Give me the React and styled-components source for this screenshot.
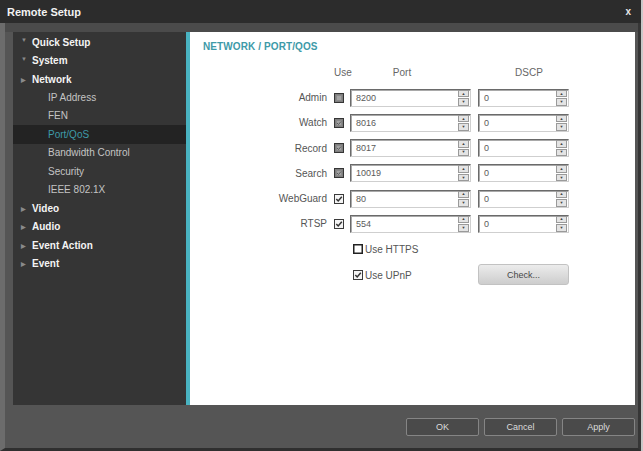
import React from 'react';
import styled, { createGlobalStyle } from 'styled-components';

const GlobalStyle = createGlobalStyle`
  html, body {
    margin: 0;
    padding: 0;
    background: #c9c9c9;
  }
  body {
    font-family: "Liberation Sans", Arial, sans-serif;
  }
`;

const TEAL = '#3e9aa8';

const Window = styled.div`
  width: 641px;
  height: 451px;
  display: flex;
  flex-direction: column;
  background: #525252;
`;

const TitleBar = styled.div`
  height: 23px;
  flex: none;
  display: flex;
  align-items: center;
  justify-content: space-between;
  padding: 0 10px 0 7px;
  background: #2c2c2c;
  color: #f2f2f2;
  font-size: 11px;
  font-weight: bold;
`;

const Close = styled.span`
  font-size: 10px;
  font-weight: bold;
  color: #e8e8e8;
`;

const Frame = styled.div`
  flex: 1;
  display: flex;
  flex-direction: column;
  border-left: 5px solid #6c6c6c;
  border-right: 3px solid #363636;
  border-bottom: 3px solid #2f2f2f;
  background: #555555;
`;

const Body = styled.div`
  height: 373px;
  display: flex;
  padding: 9px 3px 0 8px;
  background: linear-gradient(#4b4b4b 0, #4b4b4b 9px, #555 9px);
`;

const Sidebar = styled.div`
  width: 173px;
  flex: none;
  background: #353535;
  padding-top: 1px;
`;

const NavRow = styled.div`
  height: 18.45px;
  display: flex;
  align-items: center;
  padding-left: ${(p) => (p.$sub ? 35 : 8)}px;
  background: ${(p) => (p.$selected ? '#232323' : 'transparent')};
  color: ${(p) => (p.$selected ? TEAL : p.$sub ? '#c4c4c4' : '#f4f4f4')};
  font-size: 10px;
  font-weight: ${(p) => (p.$sub ? 'normal' : 'bold')};
  white-space: nowrap;
`;

const Arrow = styled.span`
  width: 11px;
  font-size: 6px;
  color: #8a8a8a;
  margin-top: ${(p) => (p.$open ? -4 : 0)}px;
`;

const Content = styled.div`
  flex: 1;
  background: #ffffff;
  border-left: 4px solid #49b3c1;
  padding: 9px 0 0 13px;
`;

const PageTitle = styled.div`
  height: 12px;
  line-height: 12px;
  font-size: 10px;
  font-weight: bold;
  color: ${TEAL};
  letter-spacing: 0.1px;
`;

const Form = styled.div`
  margin: 7px 0 0 -13px;
`;

const FieldRow = styled.div`
  display: grid;
  grid-template-columns: 137px 10px 120px 91px;
  column-gap: 7px;
  align-items: center;
  height: ${(p) => p.$h || 25.2}px;
  font-size: 10px;
  color: #555;
`;

const FieldLabel = styled.div`
  text-align: right;
  white-space: nowrap;
`;

const HeadCell = styled.div`
  text-align: center;
  color: #666;
  white-space: nowrap;
  padding: ${(p) => p.$pad || '0'};
`;

const CheckCell = styled.div`
  display: flex;
  align-items: center;
  margin-left: ${(p) => p.$offset || 0}px;
  svg {
    display: block;
  }
`;

const Spin = styled.div`
  display: flex;
  align-items: center;
  height: 18px;
  border: 1px solid;
  border-color: #6a6a6a #cfcfcf #cfcfcf #6a6a6a;
  box-shadow: inset 1px 1px 0 #a9a9a9;
  background: #fff;
  box-sizing: border-box;
  margin-left: ${(p) => (p.$first ? -1 : 0)}px;
`;

const SpinText = styled.span`
  flex: 1;
  padding-left: 5px;
  font-size: 9px;
  color: #5a5a5a;
`;

const SpinButtons = styled.div`
  width: 11px;
  height: 16px;
  margin-right: 1px;
  display: flex;
  flex-direction: column;
  gap: 1px;
`;

const SpinButton = styled.div`
  flex: 1;
  display: flex;
  align-items: center;
  justify-content: center;
  background: #e4e4e4;
  border: 1px solid #9a9a9a;
  font-size: 4px;
  line-height: 1;
  color: #444;
`;

const OptionLabel = styled.label`
  display: flex;
  align-items: center;
  gap: 2px;
  font-size: 10px;
  color: #555;
  padding-left: 2px;
`;

const CheckButton = styled.button`
  height: 21px;
  width: 91px;
  border: 1px solid #c2c2c2;
  border-radius: 3px;
  background: linear-gradient(#ececec, #cdcdcd);
  font-family: inherit;
  font-size: 9px;
  color: #474747;
  padding: 0;
  margin-top: -1px;
`;

const Footer = styled.div`
  flex: 1;
  display: flex;
  justify-content: flex-end;
  align-items: flex-start;
  gap: 5px;
  padding: 13px 3px 0 0;
`;

const FooterButton = styled.button`
  width: 73px;
  height: 18px;
  border: 1px solid #858585;
  border-radius: 2px;
  background: #4a4a4a;
  color: #dcdcdc;
  font-family: inherit;
  font-size: 9px;
  padding: 0;
`;

function Check({ kind, faint }) {
  if (kind === 'disabled') {
    return (
      <svg width="10" height="10" viewBox="0 0 10 10">
        <rect x="0.5" y="0.5" width="9" height="9" fill="#7e7e7e" stroke="#353535" />
        <rect x="2.5" y="2.5" width="5" height="5" fill="#a4a4a4" stroke="#8a8a8a" />
        {faint && <path d="M3 5 L4.5 6.5 L7 3.5" fill="none" stroke="#5c5c5c" strokeWidth="1" />}
      </svg>
    );
  }
  if (kind === 'checked') {
    return (
      <svg width="10" height="10" viewBox="0 0 10 10">
        <rect x="0.5" y="0.5" width="9" height="9" fill="#f4f4f4" stroke="#3a3a3a" />
        <path d="M2.3 5 L4.2 7 L7.8 2.8" fill="none" stroke="#333" strokeWidth="1.5" />
      </svg>
    );
  }
  return (
    <svg width="10" height="10" viewBox="0 0 10 10">
      <rect x="0.75" y="0.75" width="8.5" height="8.5" fill="#fff" stroke="#222" strokeWidth="1.5" />
    </svg>
  );
}

function SpinBox({ value, first }) {
  return (
    <Spin $first={first}>
      <SpinText>{value}</SpinText>
      <SpinButtons>
        <SpinButton>▲</SpinButton>
        <SpinButton>▼</SpinButton>
      </SpinButtons>
    </Spin>
  );
}

const navItems = [
  { label: 'Quick Setup', open: true },
  { label: 'System', open: true },
  { label: 'Network' },
  { label: 'IP Address', sub: true },
  { label: 'FEN', sub: true },
  { label: 'Port/QoS', sub: true, selected: true },
  { label: 'Bandwidth Control', sub: true },
  { label: 'Security', sub: true },
  { label: 'IEEE 802.1X', sub: true },
  { label: 'Video' },
  { label: 'Audio' },
  { label: 'Event Action' },
  { label: 'Event' },
];

const ports = [
  { name: 'Admin', port: '8200', use: 'disabled' },
  { name: 'Watch', port: '8016', use: 'disabled', faint: true },
  { name: 'Record', port: '8017', use: 'disabled', faint: true },
  { name: 'Search', port: '10019', use: 'disabled', faint: true },
  { name: 'WebGuard', port: '80', use: 'checked' },
  { name: 'RTSP', port: '554', use: 'checked' },
];

export default function App() {
  return (
    <>
      <GlobalStyle />
      <Window>
        <TitleBar>
          <span>Remote Setup</span>
          <Close>x</Close>
        </TitleBar>
        <Frame>
          <Body>
            <Sidebar>
              {navItems.map((item) => (
                <NavRow key={item.label} $sub={item.sub} $selected={item.selected}>
                  {!item.sub && <Arrow $open={item.open}>{item.open ? '▼' : '▶'}</Arrow>}
                  {item.label}
                </NavRow>
              ))}
            </Sidebar>
            <Content>
              <PageTitle>NETWORK / PORT/QOS</PageTitle>
              <Form>
                <FieldRow>
                  <span />
                  <HeadCell>Use</HeadCell>
                  <HeadCell $pad="0 18px 0 0">Port</HeadCell>
                  <HeadCell $pad="0 0 0 11px">DSCP</HeadCell>
                </FieldRow>
                {ports.map((row) => (
                  <FieldRow key={row.name}>
                    <FieldLabel>{row.name}</FieldLabel>
                    <CheckCell>
                      <Check kind={row.use} faint={row.faint} />
                    </CheckCell>
                    <SpinBox value={row.port} first />
                    <SpinBox value="0" />
                  </FieldRow>
                ))}
                <FieldRow $h={26}>
                  <span />
                  <span />
                  <OptionLabel>
                    <Check kind="empty" />
                    Use HTTPS
                  </OptionLabel>
                </FieldRow>
                <FieldRow $h={26}>
                  <span />
                  <span />
                  <OptionLabel>
                    <Check kind="checked" />
                    Use UPnP
                  </OptionLabel>
                  <CheckButton>Check...</CheckButton>
                </FieldRow>
              </Form>
            </Content>
          </Body>
          <Footer>
            <FooterButton>OK</FooterButton>
            <FooterButton>Cancel</FooterButton>
            <FooterButton>Apply</FooterButton>
          </Footer>
        </Frame>
      </Window>
    </>
  );
}
